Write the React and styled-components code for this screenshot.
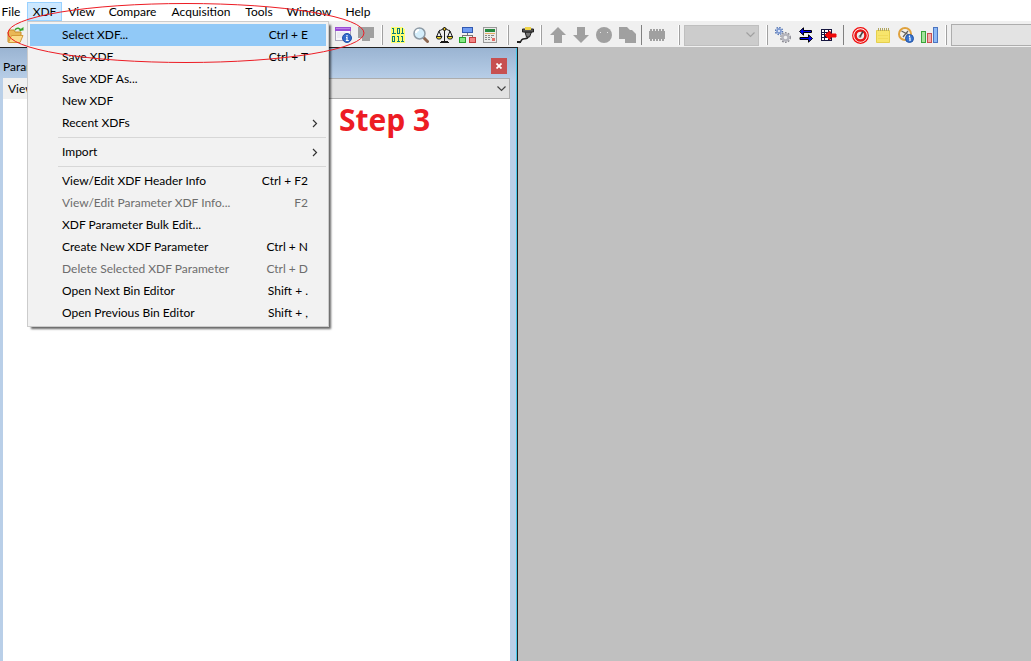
import React from 'react';
import styled, { createGlobalStyle } from 'styled-components';

const GlobalStyle = createGlobalStyle`
    * {
        box-sizing: border-box;
    }

    body {
        margin: 0;
        background: #c0c0c0;
        color: #000;
        font-family: Lato, "Open Sans", sans-serif;
        font-size: 12px;
    }

    button, select, input {
        font: inherit;
        color: inherit;
        border-radius: 0;
    }
`;

const Window = styled.div`
    position: relative;
    display: flex;
    flex-direction: column;
    min-height: 100vh;
    overflow: hidden;
`;

const MenuBar = styled.nav`
    display: grid;
    grid-template-columns: 32px 35px 39px 63px 74px 42px 58px 40px;
    height: 21px;
    margin-left: -5px;
    padding-top: 2px;
    background: #fff;
`;

const MenuTitle = styled.button`
    padding: 0;
    border: 1px solid ${props => props.$open ? '#99d1ff' : 'transparent'};
    background: ${props => props.$open ? '#cce8ff' : 'transparent'};
    line-height: 17px;
    white-space: nowrap;
`;

const MenuStrip = styled.header`
    background: #fff;
`;

const Toolbar = styled.div`
    display: flex;
    align-items: center;
    height: 26px;
    padding: 2px 0 0 4px;
    background: #f0f0f0;
`;

const ToolButton = styled.button`
    display: flex;
    align-items: center;
    justify-content: center;
    flex: 0 0 23px;
    height: 24px;
    padding: 0 1px 0 0;
    border: 0;
    background: transparent;
`;

const CoveredTools = styled.div`
    flex: 0 0 305px;
`;

const Divider = styled.span`
    flex: none;
    width: ${props => props.$thin ? 1 : 2}px;
    height: 20px;
    margin: 0 ${props => props.$after}px 0 ${props => props.$before}px;
    border-left: ${props => props.$thin ? '0' : '1px solid #fff'};
    background: ${props => props.$thin ? '#808080' : '#a0a0a0'};
`;

const SelectBox = styled.div`
    display: grid;
    flex: ${props => props.$grow ? '1' : '0 0 75px'};
    align-items: center;
    color: ${props => props.$grow ? '#444' : '#a0a0a0'};

    select, svg {
        grid-area: 1 / 1;
    }

    svg {
        justify-self: end;
        margin-right: 4px;
        pointer-events: none;
    }
`;

const Select = styled.select`
    width: 100%;
    height: 21px;
    padding: 0 20px 0 4px;
    appearance: none;
    border: 1px solid ${props => props.disabled ? '#bfbfbf' : '#adadad'};
    background: ${props => props.disabled ? '#ccc' : '#e1e1e1'};
    opacity: 1;
`;

const StatusField = styled.input`
    flex: 1;
    min-width: 0;
    height: 22px;
    padding: 0 4px;
    border: 1px solid #adadad;
    border-right: 0;
    background: #e3e3e3;
`;

const Workspace = styled.main`
    display: flex;
    flex: 1;
    background: #c0c0c0;
`;

const DockPanel = styled.section`
    display: flex;
    flex-direction: column;
    flex: 0 0 518px;
    padding: 0 7px 0 3px;
    border-top: 1px solid #222;
    border-right: 1px solid #222;
    background: linear-gradient(#9ab4d2, #b9cfe8 32px);
    box-shadow: inset -1px 0 #45c8ea;
`;

const PanelTitle = styled.div`
    display: flex;
    align-items: center;
    justify-content: space-between;
    height: 30px;
    padding: 6px 3px 0 0;
`;

const PanelName = styled.h2`
    margin: 0;
    font-size: 12px;
    font-weight: 400;
`;

const CloseButton = styled.button`
    display: flex;
    align-items: center;
    justify-content: center;
    width: 16px;
    height: 16px;
    padding: 0;
    border: 0;
    background: #c75050;
`;

const ViewRow = styled.div`
    display: flex;
    align-items: center;
    gap: 8px;
    height: 21px;
    padding-left: 5px;
    background: #f0f0f0;
`;

const TreeArea = styled.div`
    flex: 1;
    background: #fff;
`;

const Menu = styled.div`
    position: absolute;
    top: 21px;
    left: 27px;
    width: 302px;
    padding: 2px;
    border: 1px solid #ccc;
    background: #f2f2f2;
    box-shadow: 3px 3px 2px -1px rgba(0, 0, 0, 0.6);
`;

const MenuItem = styled.button`
    display: flex;
    align-items: center;
    justify-content: space-between;
    width: 100%;
    height: 22px;
    padding: 0 ${props => props.$submenu ? 8 : 18}px 0 32px;
    border: 0;
    background: ${props => props.$active ? '#91c9f7' : 'transparent'};
    color: ${props => props.disabled ? '#6d6d6d' : '#000'};
    line-height: 22px;
    white-space: nowrap;
`;

const MenuRule = styled.hr`
    height: 1px;
    margin: 3px 0 3px 28px;
    border: 0;
    background: #d7d7d7;
`;

const Highlight = styled.svg`
    position: absolute;
    top: 2px;
    left: 7px;
    pointer-events: none;
`;

const StepNote = styled.strong`
    position: absolute;
    top: 100px;
    left: 339px;
    color: #ed1c24;
    font-family: "Open Sans", "Noto Sans", sans-serif;
    font-size: 30px;
    line-height: 40px;
`;

const Icon = ({ children, w = 16, h = 16, ...rest }) => (
    <svg width={w} height={h} viewBox={`0 0 ${w} ${h}`} fill="none" aria-hidden="true" {...rest}>
        {children}
    </svg>
);

const OpenIcon = () => (
    <Icon w={17} h={17}>
        <path d="M1 15V5l2-2h4l1 2h6v4" fill="#e9b856" stroke="#c98d2a" />
        <path d="M1.500 15.500L4.500 8.500H16L13 15.500Z" fill="#fbdc8b" stroke="#d39a38" />
        <path d="M8 3c2-3 5-2 6 1" stroke="#38a52c" strokeWidth="1.500" />
        <path d="M11.500 3.500H16.500V0Z" fill="#38a52c" />
    </Icon>
);

const WindowInfoIcon = () => (
    <Icon w={17}>
        <rect x="0.500" y="0.500" width="15" height="13" fill="#f7f7fb" stroke="#aaa6bb" />
        <path d="M0 0h16v4H0z" fill="#9b4cd5" />
        <path d="M1 1h14v1H1z" fill="#bf82ea" />
        <path d="M2 6h8M2 8h6M2 10h5" stroke="#dedeea" />
        <circle cx="12" cy="11" r="4.500" fill="#336bcb" stroke="#2450a8" />
        <path d="M12 8v1.500M11 10.500h1v3M10.800 13.500h3" stroke="#fff" strokeWidth="1.200" />
    </Icon>
);

const MonitorIcon = () => (
    <Icon>
        <path d="M0 0h16v11h-4v3H4v-3H0z" fill="#a0a0a0" />
    </Icon>
);

const BinaryIcon = () => (
    <Icon w={14} shapeRendering="crispEdges">
        <path d="M0 0h11l3 3v13H0z" fill="#ffff70" />
        <path d="M1 1.500h1.500v5M1 6.500h4M6.500 1.500h2v5h-2zM11.500 1v5M10 6.500h3M1.500 9.500h2v5h-2zM6 9.500h1.500v5M6 14.500h3M10 9.500h1.500v5M10 14.500h3" stroke="#087b76" />
    </Icon>
);

const SearchIcon = () => (
    <Icon>
        <path d="M10.500 10.500L14.500 14.500" stroke="#8b6650" strokeWidth="3" strokeLinecap="round" />
        <circle cx="6.500" cy="6.500" r="5.500" fill="#d4edfa" stroke="#8d9aa5" strokeWidth="1.500" />
        <path d="M3 6c0-2 1-3 3-3" stroke="#fff" strokeWidth="2" />
    </Icon>
);

const ScalesIcon = () => (
    <Icon w={17}>
        <path d="M8.500 0v14M3 3.500c3 0 3-2 5.500-2s2.500 2 5.500 2M3 4L.500 10h5L3 4M14 4l-2.500 6h5L14 4M5 14.500h7M4 15.500h9" stroke="#171717" />
        <path d="M0 9.500h6L4.500 12h-3zM11 9.500h6L15.500 12h-3z" fill="#f4dd25" stroke="#222" />
        <circle cx="8.500" cy="2" r="1.500" fill="#e8c31d" stroke="#111" />
    </Icon>
);

const NetworkIcon = () => (
    <Icon w={17} shapeRendering="crispEdges">
        <path d="M8.500 6v3M3.500 11V8.500h10V11" stroke="#777" />
        <rect x="3.500" y="0.500" width="10" height="5" fill="#6f9cf2" stroke="#3159b1" />
        <rect x="0.500" y="10.500" width="6" height="5" fill="#84e883" stroke="#27a22b" />
        <rect x="10.500" y="10.500" width="6" height="5" fill="#f18484" stroke="#c43d3d" />
    </Icon>
);

const CalculatorIcon = () => (
    <Icon w={14} shapeRendering="crispEdges">
        <rect x="0.500" y="0.500" width="13" height="15" fill="#ececea" stroke="#999" />
        <path d="M2 2h10v3H2z" fill="#298a40" />
        <path d="M2 6.500h10" stroke="#e6ad68" />
        <path d="M2 8.500h2M5 8.500h2M8 8.500h3M2 10.500h2M5 10.500h2M2 12.500h2M5 12.500h2M8 10.500h1" stroke="#888" />
        <path d="M9 11h3v3H9z" fill="#e26e68" />
    </Icon>
);

const PlugIcon = () => (
    <Icon w={17} h={17}>
        <path d="M11 9.500c0 3-3 2-5 2.500-3 1-1 3.500-4 3.500" stroke="#222" strokeWidth="1.600" />
        <path d="M8 5l1.500 5h3L14.500 5z" fill="#777" stroke="#222" />
        <path d="M5.500 2h11v3h-11z" fill="#555" stroke="#222" />
        <path d="M8 0h6v3H8z" fill="#efd54a" />
        <path d="M0 14h4v2H0z" fill="#222" />
    </Icon>
);

const UpIcon = () => (
    <Icon>
        <path d="M8 0l8 8h-4v8H4V8H0z" fill="#a0a0a0" />
    </Icon>
);

const DownIcon = () => (
    <Icon>
        <path d="M4 0h8v8h4l-8 8-8-8h4z" fill="#a0a0a0" />
    </Icon>
);

const FaceIcon = () => (
    <Icon>
        <circle cx="8" cy="8" r="8" fill="#a0a0a0" />
        <path d="M4 5h1v1H4zM11 5h1v1h-1z" fill="#e6e6e6" />
    </Icon>
);

const CopyIcon = () => (
    <Icon w={17}>
        <path d="M0 0h8l3 3h2l4 4v9H6v-4H0z" fill="#a0a0a0" />
    </Icon>
);

const ChipIcon = () => (
    <Icon h={12} shapeRendering="crispEdges">
        <path d="M0 2h16v8H0zM1 0h2v12H1zM4 0h2v12H4zM7 0h2v12H7zM10 0h2v12h-2zM13 0h2v12h-2z" fill="#a0a0a0" />
    </Icon>
);

const GearsIcon = () => (
    <Icon>
        <circle cx="4" cy="4" r="3.500" stroke="#5576b5" strokeWidth="1.500" strokeDasharray="1.500 1.200" />
        <circle cx="4" cy="4" r="2" fill="#eff4ff" stroke="#7f9bd2" strokeWidth="1.800" />
        <circle cx="10.500" cy="10.500" r="4.700" stroke="#898991" strokeWidth="1.500" strokeDasharray="1.700 1.300" />
        <circle cx="10.500" cy="10.500" r="3" fill="#f0f0f0" stroke="#b5b5bd" strokeWidth="2.400" />
    </Icon>
);

const SwapIcon = () => (
    <Icon w={14} h={16}>
        <path d="M0.500 4.500L4.500 .800V3.500H12.500v2H4.500v2.700zM13.500 11.500L9.500 7.800V10.500H1v2h8.500v2.700z" fill="#0000f0" stroke="#000" />
    </Icon>
);

const GridArrowIcon = () => (
    <Icon h={14}>
        <path d="M0 1h11v12H0z" fill="#16163f" />
        <path d="M1 2h2v2H1zM4 2h3v2H4zM8 2h2v2H8zM1 5h2v1H1zM4 5h1v1H4zM1 7h2v2H1zM1 10h2v2H1zM4 10h3v2H4zM8 11h2v1H8z" fill="#fff" />
        <path d="M4 7l5-4v3h6v3H9v3z" fill="#f00b0b" stroke="#f00b0b" />
    </Icon>
);

const GaugeIcon = () => (
    <Icon w={17} h={17}>
        <circle cx="8.500" cy="8.500" r="7.800" fill="#fff" stroke="#f00b0b" strokeWidth="1.200" />
        <circle cx="8.500" cy="8.500" r="5" fill="#eee" stroke="#e71616" strokeWidth="2.600" />
        <circle cx="8" cy="9.500" r="1.500" fill="#999" />
        <path d="M8 9.500l3-5" stroke="#444" strokeWidth="1.500" />
    </Icon>
);

const NotesIcon = () => (
    <Icon w={15} h={15}>
        <path d="M.500 2.500h13v12H.500z" fill="#f7e56c" stroke="#e5cf4d" />
        <path d="M2.500 0v3M4.500 0v3M6.500 0v3M8.500 0v3M10.500 0v3M12.500 0v3" stroke="#b0a560" />
        <path d="M2 7.500h10M2 10.500h10" stroke="#f1db5b" />
    </Icon>
);

const CompassIcon = () => (
    <Icon>
        <circle cx="7" cy="7" r="6" fill="#f4f1e9" stroke="#dfa13d" strokeWidth="2" />
        <path d="M3.500 4L11 8M5 10l5-6" stroke="#62605c" strokeWidth="1.200" />
        <circle cx="11.500" cy="11.500" r="4" fill="#3874cf" stroke="#2454a5" />
        <path d="M11.500 8.500V10M11 11h1v3" stroke="#fff" strokeWidth="1.200" />
    </Icon>
);

const BarsIcon = () => (
    <Icon w={17} shapeRendering="crispEdges">
        <rect x="0.500" y="4.500" width="4" height="11" fill="#a3e39b" stroke="#3aa43a" />
        <rect x="6.500" y="6.500" width="4" height="9" fill="#f4aaaa" stroke="#c85050" />
        <rect x="12.500" y="0.500" width="4" height="15" fill="#8db9f5" stroke="#4c74c0" />
    </Icon>
);

const ChevronDown = () => (
    <Icon w={9} h={6}>
        <path d="M.500 .500l4 4 4-4" stroke="currentColor" strokeWidth="1.200" />
    </Icon>
);

const ChevronRight = () => (
    <Icon w={6} h={9}>
        <path d="M1 1l3.500 3.500L1 8" stroke="#333" strokeWidth="1.200" />
    </Icon>
);

const menuTitles = ['File', 'XDF', 'View', 'Compare', 'Acquisition', 'Tools', 'Window', 'Help'];

const menuItems = [
    { label: 'Select XDF...', keys: 'Ctrl + E', active: true },
    { label: 'Save XDF', keys: 'Ctrl + T' },
    { label: 'Save XDF As...' },
    { label: 'New XDF' },
    { label: 'Recent XDFs', submenu: true },
    { rule: true },
    { label: 'Import', submenu: true },
    { rule: true },
    { label: 'View/Edit XDF Header Info', keys: 'Ctrl + F2' },
    { label: 'View/Edit Parameter XDF Info...', keys: 'F2', disabled: true },
    { label: 'XDF Parameter Bulk Edit...' },
    { label: 'Create New XDF Parameter', keys: 'Ctrl + N' },
    { label: 'Delete Selected XDF Parameter', keys: 'Ctrl + D', disabled: true },
    { label: 'Open Next Bin Editor', keys: 'Shift + .' },
    { label: 'Open Previous Bin Editor', keys: 'Shift + ,' },
];

const Tool = ({ label, icon: Glyph, disabled }) => (
    <ToolButton type="button" aria-label={label} disabled={disabled}>
        <Glyph />
    </ToolButton>
);

const MainToolbar = () => (
    <Toolbar>
        <Tool label="Open" icon={OpenIcon} />
        <CoveredTools />
        <Tool label="Item info" icon={WindowInfoIcon} />
        <Tool label="Monitor" icon={MonitorIcon} disabled />
        <Divider $before={3} $after={4} />
        <Tool label="Binary" icon={BinaryIcon} />
        <Tool label="Find" icon={SearchIcon} />
        <Tool label="Compare" icon={ScalesIcon} />
        <Tool label="Structure" icon={NetworkIcon} />
        <Tool label="Calculator" icon={CalculatorIcon} />
        <Divider $before={5} $after={5} />
        <Tool label="Connect" icon={PlugIcon} />
        <Divider $before={3} $after={5} />
        <Tool label="Upload" icon={UpIcon} disabled />
        <Tool label="Download" icon={DownIcon} disabled />
        <Tool label="Verify" icon={FaceIcon} disabled />
        <Tool label="Copy" icon={CopyIcon} disabled />
        <Divider $thin $before={2} $after={4} />
        <Tool label="Chip" icon={ChipIcon} disabled />
        <Divider $before={9} $after={4} />
        <SelectBox>
            <Select aria-label="Device" disabled />
            <ChevronDown />
        </SelectBox>
        <Divider $before={7} $after={4} />
        <Tool label="Settings" icon={GearsIcon} />
        <Tool label="Swap" icon={SwapIcon} />
        <Tool label="Insert table" icon={GridArrowIcon} />
        <Divider $thin $before={2} $after={5} />
        <Tool label="Gauge" icon={GaugeIcon} />
        <Tool label="Notes" icon={NotesIcon} />
        <Tool label="Dashboard info" icon={CompassIcon} />
        <Tool label="Chart" icon={BarsIcon} />
        <Divider $before={4} $after={4} />
        <StatusField aria-label="Status" readOnly />
    </Toolbar>
);

const XdfMenu = () => (
    <Menu>
        {menuItems.map((item, i) => item.rule ? <MenuRule key={i} /> : (
            <MenuItem
                key={i}
                type="button"
                disabled={item.disabled}
                $active={item.active}
                $submenu={item.submenu}
            >
                <span>{item.label}</span>
                {item.submenu ? <ChevronRight /> : <span>{item.keys}</span>}
            </MenuItem>
        ))}
    </Menu>
);

const App = () => (
    <Window>
        <GlobalStyle />
        <MenuStrip>
            <MenuBar>
                {menuTitles.map(title => (
                    <MenuTitle key={title} type="button" $open={title === 'XDF'}>{title}</MenuTitle>
                ))}
            </MenuBar>
        </MenuStrip>
        <MainToolbar />
        <Workspace>
            <DockPanel>
                <PanelTitle>
                    <PanelName>Parameter Tree</PanelName>
                    <CloseButton type="button" aria-label="Close">
                        <Icon w={6} h={6}>
                            <path d="M.500 .500l5 5M5.500 .500l-5 5" stroke="#fff" strokeWidth="1.800" />
                        </Icon>
                    </CloseButton>
                </PanelTitle>
                <ViewRow>
                    <label htmlFor="view">View:</label>
                    <SelectBox $grow>
                        <Select id="view" />
                        <ChevronDown />
                    </SelectBox>
                </ViewRow>
                <TreeArea />
            </DockPanel>
        </Workspace>
        <XdfMenu />
        <StepNote>Step 3</StepNote>
        <Highlight width="360" height="62" viewBox="0 0 360 62" fill="none">
            <ellipse cx="179" cy="31" rx="178" ry="29.500" stroke="#ed1c24" />
        </Highlight>
    </Window>
);

export default App;
